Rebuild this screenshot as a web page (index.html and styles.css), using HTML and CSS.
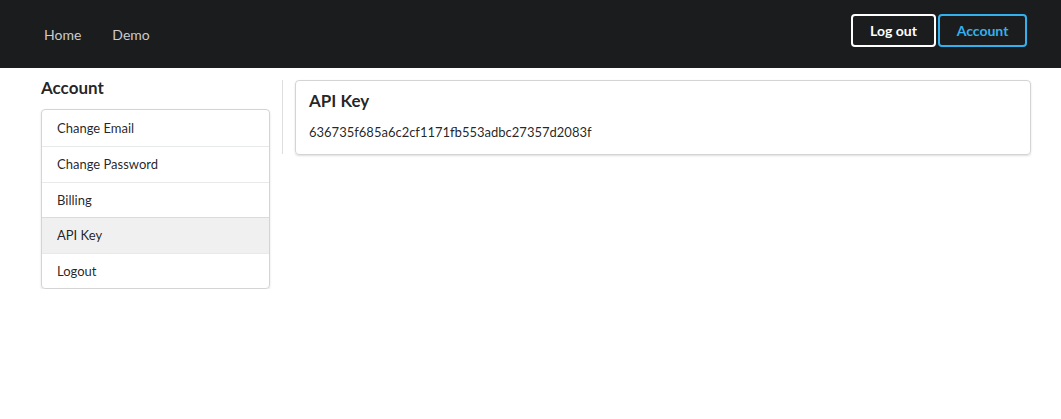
FILE: index.html
```html
<!DOCTYPE html>
<html>
<head>
<meta charset="utf-8">
<link rel="stylesheet" href="styles.css">
</head>
<body>
<header class="topbar">
  <nav class="nav-left">
    <a class="nav-link">Home</a>
    <a class="nav-link">Demo</a>
  </nav>
  <div class="nav-right">
    <button class="btn btn-white">Log out</button>
    <button class="btn btn-blue">Account</button>
  </div>
</header>
<main class="page">
  <aside class="sidebar">
    <h2 class="side-title">Account</h2>
    <ul class="side-menu">
      <li class="side-item">Change Email</li>
      <li class="side-item">Change Password</li>
      <li class="side-item">Billing</li>
      <li class="side-item active">API Key</li>
      <li class="side-item">Logout</li>
    </ul>
  </aside>
  <div class="divider"></div>
  <section class="content">
    <div class="card">
      <h3 class="card-title">API Key</h3>
      <p class="card-text">636735f685a6c2cf1171fb553adbc27357d2083f</p>
    </div>
  </section>
</main>
</body>
</html>
```

FILE: styles.css
```css
* { box-sizing: border-box; }
body {
  margin: 0;
  font-family: Lato, "Helvetica Neue", Arial, sans-serif;
  color: rgba(0,0,0,.87);
  background: #fff;
}
.topbar {
  height: 68px;
  background: #1b1c1d;
  display: flex;
  align-items: center;
  justify-content: space-between;
  padding: 0 34px 0 44px;
}
.nav-left { display: flex; gap: 31px; }
.nav-link {
  color: rgba(255,255,255,.78);
  font-size: 14px;
  line-height: 16px;
  margin-top: 2px;
}
.nav-right { display: flex; gap: 2px; margin-top: -8px; }
.btn {
  height: 33px;
  background: transparent;
  border-radius: 4px;
  font-family: Lato, sans-serif;
  font-weight: 700;
  font-size: 14px;
  padding: 0;
}
.btn-white { width: 85px; border: 2px solid #fff; color: #fff; }
.btn-blue { width: 89px; border: 2px solid #33b0ee; color: #33b0ee; }
.page {
  display: flex;
  padding: 12px 30px 0 41px;
}
.sidebar { width: 229px; flex: none; }
.side-title {
  margin: 0;
  font-size: 17px;
  line-height: 20px;
  font-weight: 700;
  height: 30px;
  margin-top: -2px;
}
.side-menu {
  list-style: none;
  margin: 0;
  padding: 0;
  border: 1px solid #d4d4d5;
  border-radius: 4px;
  box-shadow: 0 1px 2px rgba(34,36,38,.15);
  overflow: hidden;
  margin-top: 1px;
}
.side-item {
  height: 35.5px;
  line-height: 35px;
  padding-left: 15px;
  font-size: 13px;
  border-top: 1px solid rgba(34,36,38,.1);
}
.side-item:first-child { border-top: 0; height: 36px; line-height: 37px; }
.side-item.active { background: #f0f0f0; }
.divider {
  width: 1px;
  flex: none;
  height: 74px;
  background: rgba(34,36,38,.15);
  margin: 0 12px 0 12px;
}
.content { flex: 1; }
.card {
  border: 1px solid #d4d4d5;
  border-radius: 4px;
  box-shadow: 0 1px 2px rgba(34,36,38,.15);
  padding: 10px 13px 14px 13px;
  height: 75px;
}
.card-title {
  margin: 0;
  font-size: 17px;
  line-height: 20px;
  font-weight: 700;
}
.card-text {
  margin: 13px 0 0;
  font-size: 13px;
  line-height: 16px;
}
```
